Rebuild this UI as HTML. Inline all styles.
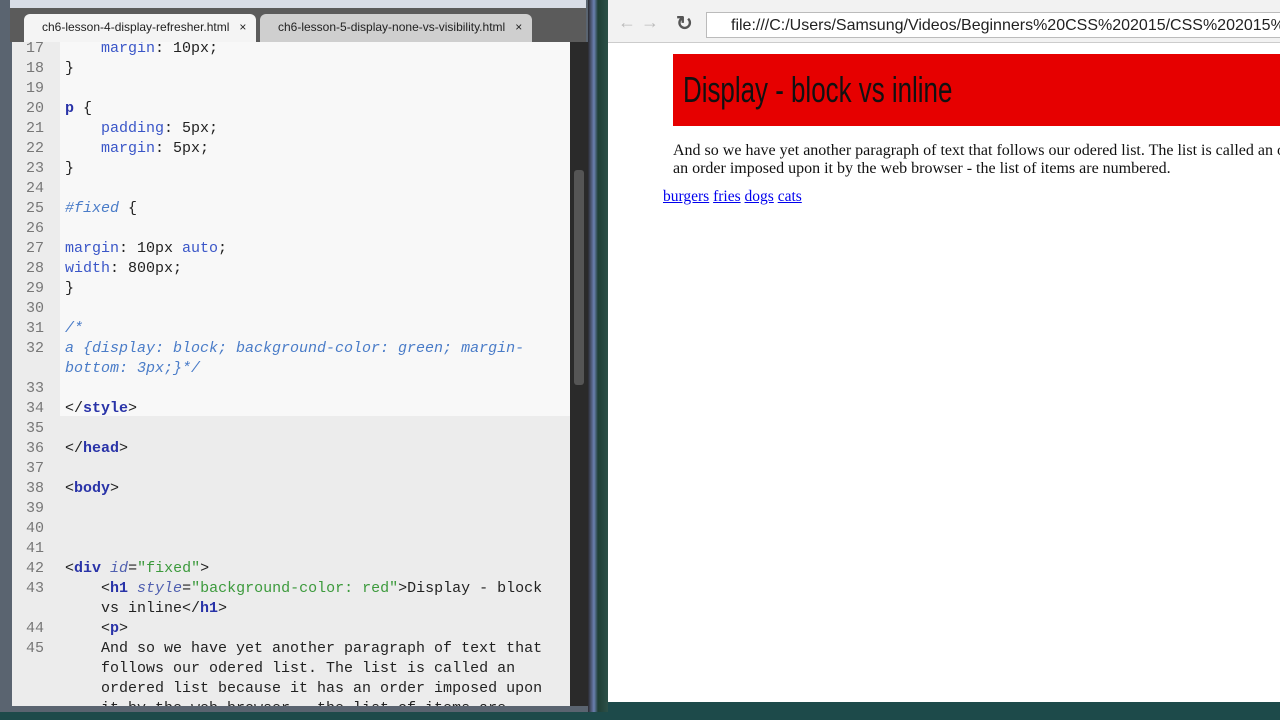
<!DOCTYPE html>
<html><head><style>
body{margin:0;width:1280px;height:720px;overflow:hidden;background:#1d4a4a;position:relative;font-family:"Liberation Sans",sans-serif}
.ed{position:absolute;left:0;top:0;width:592px;height:712px;background:#5a6470}
.menu{position:absolute;left:10px;top:0;width:576px;height:8px;background:#d8dde6}
.tabs{position:absolute;left:10px;top:8px;width:576px;height:34px;background:#5b5b5b}
.tab{position:absolute;top:6px;height:28px;font-size:12px;line-height:26px;color:#222;padding-left:18px;box-sizing:border-box;border-radius:6px 6px 0 0}
.code{position:absolute;left:12px;top:42px;width:558px;height:664px;background:#ececec;overflow:hidden}
.top{position:absolute;left:0;top:0;width:558px;height:374px;background:#f8f8f8}
.gut{position:absolute;left:0;top:0;width:48px;height:664px;background:#ececec}
.ln,.cl{position:absolute;font-family:"Liberation Mono",monospace;font-size:15px;line-height:20px;white-space:pre}
.ln{left:0;width:32px;text-align:right;color:#777}
.cl{left:53px;color:#222}
.k{color:#2933a8;font-weight:bold}.n{color:#3a56c8}.c{color:#4a7cc8;font-style:italic}.s{color:#3c9a3c}.a{color:#5060b0;font-style:italic}
.sb{position:absolute;left:570px;top:42px;width:18px;height:664px;background:#2a2a2a}
.th{position:absolute;left:574px;top:170px;width:10px;height:215px;background:#555;border-radius:3px}
.fr{position:absolute;left:588px;top:0;width:20px;height:712px;background:linear-gradient(90deg,#2a2a30,#6a80b0 30%,#1f3f35 50%,#2c5048)}
.br{position:absolute;left:608px;top:0;width:672px;height:702px;background:#fff;overflow:hidden}
.bt{position:absolute;left:0;top:0;width:672px;height:42px;background:#f2f2f2;border-bottom:1px solid #ccc}
.url{position:absolute;left:98px;top:12px;width:580px;height:26px;background:#fff;border:1px solid #bbb;font-size:16px;line-height:26px;padding-left:24px;color:#222;white-space:nowrap;overflow:hidden;box-sizing:border-box}
h1{position:absolute;left:65px;top:54px;width:620px;height:72px;margin:0;background:#e60000;font:normal 36px "Liberation Sans Narrow","Liberation Sans",sans-serif;line-height:72px;padding-left:10px;color:#111;white-space:nowrap}
h1 span{display:inline-block;transform:scaleX(0.72);transform-origin:left}
p{position:absolute;left:65px;top:141px;width:700px;margin:0;font:16px/18px "Liberation Serif",serif;color:#111;white-space:nowrap}
.lk{position:absolute;left:55px;top:187px;font:15.5px "Liberation Serif",serif}
.lk a{color:#0000ee;text-decoration:underline}
</style></head><body>
<div class="ed">
<div class="menu"></div>
<div class="tabs">
<div class="tab" style="left:14px;width:232px;background:#f4f4f4">ch6-lesson-4-display-refresher.html &nbsp;&nbsp;×</div>
<div class="tab" style="left:250px;width:272px;background:#cfcfcf">ch6-lesson-5-display-none-vs-visibility.html &nbsp;&nbsp;×</div>
</div>
<div class="code">
<div class="top"></div><div class="gut"></div>
<div class="ln" style="top:-3px">17
18
19
20
21
22
23
24
25
26
27
28
29
30
31
32

33
34
35
36
37
38
39
40
41
42
43

44
45</div>
<div class="cl" style="top:-3px">    <span class="n">margin</span>: 10px;
}

<span class="k">p</span> {
    <span class="n">padding</span>: 5px;
    <span class="n">margin</span>: 5px;
}

<span class="c">#fixed</span> {

<span class="n">margin</span>: 10px <span class="n">auto</span>;
<span class="n">width</span>: 800px;
}

<span class="c">/*
a {display: block; background-color: green; margin-
bottom: 3px;}*/</span>

&lt;/<span class="k">style</span>&gt;

&lt;/<span class="k">head</span>&gt;

&lt;<span class="k">body</span>&gt;



&lt;<span class="k">div</span> <span class="a">id</span>=<span class="s">"fixed"</span>&gt;
    &lt;<span class="k">h1</span> <span class="a">style</span>=<span class="s">"background-color: red"</span>&gt;Display - block
    vs inline&lt;/<span class="k">h1</span>&gt;
    &lt;<span class="k">p</span>&gt;
    And so we have yet another paragraph of text that
    follows our odered list. The list is called an
    ordered list because it has an order imposed upon
    it by the web browser - the list of items are</div>
</div>
<div class="sb"></div><div class="th"></div>
</div>
<div class="fr"></div>
<div class="br">
<div class="bt"><span style="position:absolute;left:10px;top:12px;color:#bbb;font-size:18px">← →</span><span style="position:absolute;left:68px;top:11px;color:#555;font-size:20px;font-weight:bold">↻</span>
<div class="url">file:///C:/Users/Samsung/Videos/Beginners%20CSS%202015/CSS%202015%20</div></div>
<h1><span>Display - block vs inline</span></h1>
<p style="top:142px">And so we have yet another paragraph of text that follows our odered list. The list is called an o<br>an order imposed upon it by the web browser - the list of items are numbered.</p>
<div class="lk" style="top:188px"><a>burgers</a> <a>fries</a> <a>dogs</a> <a>cats</a></div>
</div>
</body></html>
